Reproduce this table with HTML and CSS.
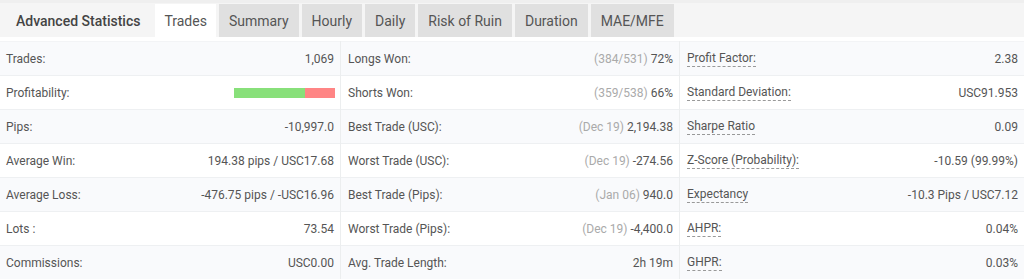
FILE: index.html
```html
<!DOCTYPE html>
<html>
<head>
<meta charset="utf-8">
<link rel="stylesheet" href="styles.css">
</head>
<body>
<div class="tabs">
  <div class="title">Advanced Statistics</div>
  <div class="tab active">Trades</div>
  <div class="tab">Summary</div>
  <div class="tab">Hourly</div>
  <div class="tab">Daily</div>
  <div class="tab">Risk of Ruin</div>
  <div class="tab">Duration</div>
  <div class="tab">MAE/MFE</div>
</div>
<div class="stats">
  <div class="col">
    <div class="row"><span class="label">Trades:</span><span class="val">1,069</span></div>
    <div class="row"><span class="label">Profitability:</span><span class="bar"><span class="win" style="width:70%"></span><span class="loss"></span></span></div>
    <div class="row"><span class="label">Pips:</span><span class="val">-10,997.0</span></div>
    <div class="row"><span class="label">Average Win:</span><span class="val">194.38 pips / USC17.68</span></div>
    <div class="row"><span class="label">Average Loss:</span><span class="val">-476.75 pips / -USC16.96</span></div>
    <div class="row"><span class="label">Lots :</span><span class="val">73.54</span></div>
    <div class="row"><span class="label">Commissions:</span><span class="val">USC0.00</span></div>
  </div>
  <div class="col">
    <div class="row"><span class="label">Longs Won:</span><span class="val"><span class="muted">(384/531)</span> 72%</span></div>
    <div class="row"><span class="label">Shorts Won:</span><span class="val"><span class="muted">(359/538)</span> 66%</span></div>
    <div class="row"><span class="label">Best Trade (USC):</span><span class="val"><span class="muted">(Dec 19)</span> 2,194.38</span></div>
    <div class="row"><span class="label">Worst Trade (USC):</span><span class="val"><span class="muted">(Dec 19)</span> -274.56</span></div>
    <div class="row"><span class="label">Best Trade (Pips):</span><span class="val"><span class="muted">(Jan 06)</span> 940.0</span></div>
    <div class="row"><span class="label">Worst Trade (Pips):</span><span class="val"><span class="muted">(Dec 19)</span> -4,400.0</span></div>
    <div class="row"><span class="label">Avg. Trade Length:</span><span class="val">2h 19m</span></div>
  </div>
  <div class="col">
    <div class="row"><span class="label dotted">Profit Factor:</span><span class="val">2.38</span></div>
    <div class="row"><span class="label dotted">Standard Deviation:</span><span class="val">USC91.953</span></div>
    <div class="row"><span class="label dotted">Sharpe Ratio</span><span class="val">0.09</span></div>
    <div class="row"><span class="label dotted">Z-Score (Probability):</span><span class="val">-10.59 (99.99%)</span></div>
    <div class="row"><span class="label dotted">Expectancy</span><span class="val">-10.3 Pips / USC7.12</span></div>
    <div class="row"><span class="label dotted">AHPR:</span><span class="val">0.04%</span></div>
    <div class="row"><span class="label dotted">GHPR:</span><span class="val">0.03%</span></div>
  </div>
</div>
</body>
</html>
```

FILE: styles.css
```css
* { box-sizing: border-box; }
html, body { margin: 0; padding: 0; }
body {
  width: 1024px;
  height: 280px;
  overflow: hidden;
  background: #ffffff;
  font-family: Roboto, "Liberation Sans", sans-serif;
  color: #555;
}
.tabs {
  display: flex;
  align-items: stretch;
  gap: 3px;
  background: #f5f5f5;
  border-top: 3px solid #efefef;
  padding-top: 1px;
  height: 37px;
}
.title {
  padding: 0 12px 0 16px;
  display: flex;
  align-items: center;
  font-size: 14px;
  font-weight: 500;
  color: #444;
}
.tab {
  display: flex;
  align-items: center;
  padding: 0 10px;
  background: #e0e0e0;
  font-size: 14px;
  color: #555;
}
.tab.active {
  background: #ffffff;
  padding: 0 9px;
}
.stats {
  display: grid;
  grid-template-columns: 340px 339px 1fr;
  padding-top: 4px;
}
.col + .col {
  border-left: 1px solid #eceeef;
}
.row {
  display: flex;
  justify-content: space-between;
  align-items: center;
  height: 34px;
  padding: 0 6px 0 6px;
  border-top: 1px solid #eef0f2;
  font-size: 12px;
}
.col .row:first-child { border-top: 1px solid #f3f4f6; }
.row:nth-child(odd) { background: #f9fafc; }
.row:nth-child(even) { background: #ffffff; }
.col + .col .row { padding-left: 7px; }
.label { color: #555; }
.label.dotted {
  border-bottom: 1px dashed #999;
  line-height: 15px;
  padding-top: 1px;
}
.val { color: #555; white-space: nowrap; }
.muted { color: #aaa; }
.bar {
  display: flex;
  width: 101px;
  height: 10px;
  margin-right: -1px;
}
.win { background: #88e07a; height: 100%; }
.loss { background: #ff8585; flex: 1; height: 100%; }
```
